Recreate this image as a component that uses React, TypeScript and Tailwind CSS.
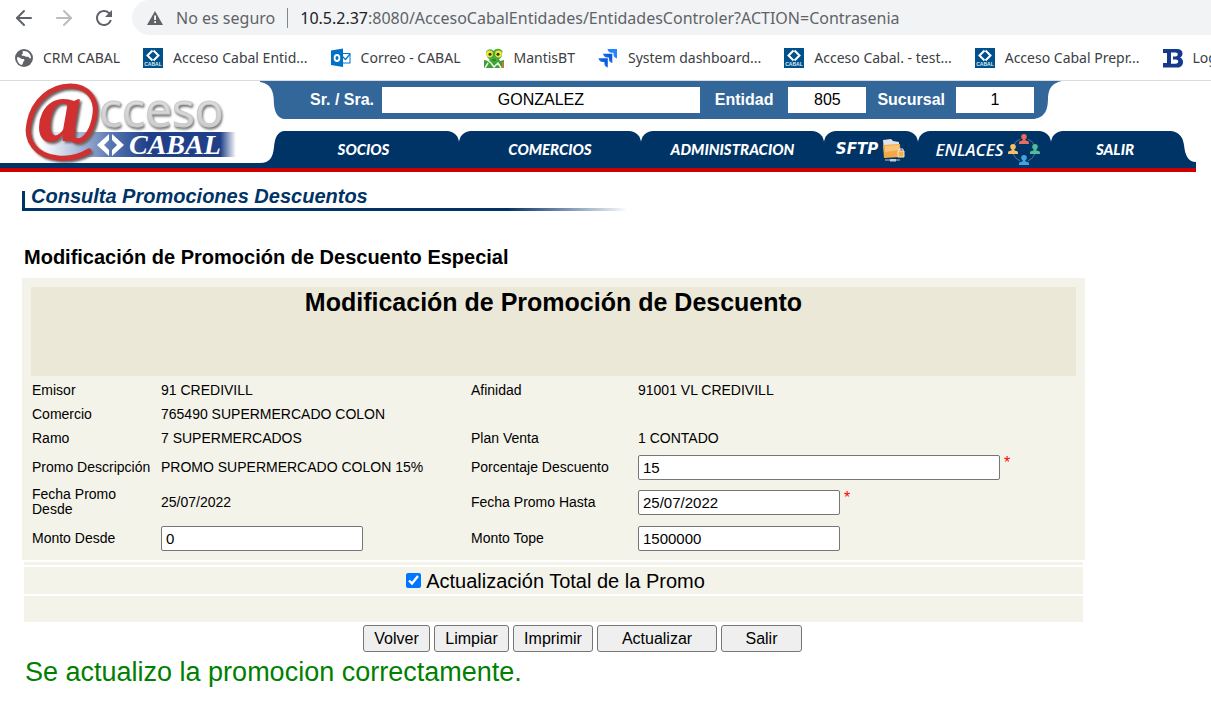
import { useState } from "react";
import { ArrowLeft, ArrowRight } from "lucide-react";
import { MdRefresh } from "react-icons/md";

const CabalTile = () => (
  <svg width="20" height="20" viewBox="0 0 20 20" className="shrink-0">
    <rect width="20" height="20" fill="#00508c" />
    <path d="M9.500 2.500 4.500 7.500l5 5M10.500 2.500l5 5-5 5" fill="none" stroke="#fff" strokeWidth="2" />
    <text x="10" y="18" textAnchor="middle" fontSize="5" fontWeight="700" fill="#dcebf5" fontFamily="Liberation Sans, sans-serif">
      CABAL
    </text>
  </svg>
);

const GlobeIcon = () => (
  <svg width="18" height="18" viewBox="0 0 18 18" className="shrink-0">
    <circle cx="9" cy="9" r="9" fill="#5f6368" />
    <path d="M2 8.2c1.6-.2 3 .2 3.700 1.100.5.9 1.900.6 2.900.8 1.200.3 1 1.600.2 2.200-.9.700-.6 1.700-1.200 2.700-.3.600-.8 1-1.400 1C3.500 14.800 1.800 11.800 2 8.200z" fill="#fff" />
    <path d="M7.600 2.200c2.300-.6 4.700.2 6.200 1.700 1.400 1.400 2.200 3.200 2.200 5.100-.8.900-1.600.3-2-.6-.5-1-1.500-.7-2.400-.6-1.200.1-1.700-1-2.800-1.100-1-.1-2 .2-2.200-.7-.1-.8.900-.9 1.300-1.500.4-.7-.6-1.500-.3-2.300z" fill="#fff" />
  </svg>
);

const OutlookIcon = () => (
  <svg width="20" height="20" viewBox="0 0 20 20" className="shrink-0">
    <rect x="9" y="5.500" width="10" height="9.500" fill="#fff" stroke="#0072c6" />
    <path d="m11 8 3.500 3.500L19 6" fill="none" stroke="#0072c6" strokeWidth="1.200" />
    <path d="M0 2.500 12 .5v18.500L0 17z" fill="#0072c6" />
    <ellipse cx="6" cy="10" rx="2.400" ry="3" fill="none" stroke="#fff" strokeWidth="1.800" />
  </svg>
);

const MantisIcon = () => (
  <svg width="20" height="20" viewBox="0 0 20 20" className="shrink-0">
    <path d="M0 12l5 1 2-3h7l2 3 4-1v8H0z" fill="#3f9e3a" />
    <path d="M3 12l4 3 3 4 4-4 3 5M1 20l3-5" fill="none" stroke="#e9f7e4" strokeWidth="1.500" />
    <path d="M2 3.500C5 0 8 1 9.500 3 12 0 16 0 18.500 3l-1 6-5 5H8L3 9z" fill="#45ad32" />
    <circle cx="5.500" cy="6" r="3.400" fill="#f2e33a" />
    <circle cx="14.500" cy="6" r="3.400" fill="#f2e33a" />
    <circle cx="6" cy="6.300" r="1.500" fill="#2c3a12" />
    <circle cx="14" cy="6.300" r="1.500" fill="#2c3a12" />
    <path d="M8 12h4" stroke="#1f6c1d" />
    <rect x="18" y="14" width="2" height="6" fill="#c77836" />
  </svg>
);

const JiraIcon = () => (
  <svg width="20" height="20" viewBox="0 0 20 20" className="shrink-0">
    <defs>
      <linearGradient id="jira" x1="1" y1="0" x2="0" y2="1">
        <stop offset="0.300" stopColor="#0b5cdb" />
        <stop offset="1" stopColor="#3b90ff" />
      </linearGradient>
    </defs>
    <path d="M9.500 1H19v9.500c-2.200-.6-3.500-2-3.500-4.200V4.700h-1.800C11.300 4.700 9.900 3.200 9.500 1z" fill="#2684ff" />
    <path d="M5 5.700h9.300v9.300c-2.200-.6-3.400-2-3.400-4.100V9.400H9.200C7 9.400 5.500 8 5 5.700z" fill="url(#jira)" />
    <path d="M.5 10.300h9.300v9.300c-2.200-.6-3.400-2-3.400-4.100V14H4.700C2.500 14 1 12.600.5 10.300z" fill="url(#jira)" />
  </svg>
);

const BIcon = () => (
  <svg width="20" height="20" viewBox="0 0 20 20" className="shrink-0">
    <path
      fillRule="evenodd"
      d="M0 1h14c3.500 0 5.500 1.600 5.500 4.500 0 2-1 3.400-2.500 4 2 .7 3 2.200 3 4.500 0 3.500-2.300 5.500-6 5.500H0v-4.500h4V5H0zM8 4.500h4.500c1.500 0 2.200.7 2.200 1.900s-.8 2-2.200 2H10v3h2.800c1.600 0 2.400.8 2.400 2.100 0 1.400-.9 2.200-2.500 2.200H8z"
      fill="#153a8c"
    />
  </svg>
);

const Logo = () => (
  <svg width="240" height="82" viewBox="0 0 240 82" role="img" aria-label="Acceso Cabal">
    <defs>
      <linearGradient id="logoBar">
        <stop offset="0" stopColor="#7d96c6" stopOpacity="0" />
        <stop offset="0.350" stopColor="#5b7ab5" />
        <stop offset="0.550" stopColor="#1f4088" />
        <stop offset="0.920" stopColor="#1f4088" />
        <stop offset="1" stopColor="#1f4088" stopOpacity="0" />
      </linearGradient>
      <linearGradient id="logoGray" x2="0" y2="1">
        <stop offset="0" stopColor="#ececec" />
        <stop offset="1" stopColor="#c4c4c4" />
      </linearGradient>
    </defs>
    <rect x="40" y="51" width="196" height="25" fill="url(#logoBar)" />
    <text
      x="99"
      y="46"
      fill="url(#logoGray)"
      stroke="#c9c9c9"
      fontFamily="'Open Sans', sans-serif"
      fontSize="48"
      className="drop-shadow-[1px_2px_1px_#777777]"
    >
      cceso
    </text>
    <g className="drop-shadow-[2px_2px_1px_#6b6464]">
      <path
        d="M89 70C79 76 68 78 58 77 36 75 25 60 29 42 33 20 51 5 70 5 88 5 97 18 95 33 93 48 86 60 77 60 73 60 71 57 73 50"
        fill="none"
        stroke="#d03030"
        strokeWidth="5"
        strokeLinecap="round"
      />
      <text x="38" y="60" fill="#d03030" fontFamily="'Liberation Serif', serif" fontStyle="italic" fontWeight="700" fontSize="88">
        a
      </text>
    </g>
    <path d="M109 53 97 64l12 11v-6l-5-5 5-5zM112 53l12 11-12 11v-6l5-5-5-5z" fill="#fff" />
    <text x="129" y="73" fill="#fff" fontFamily="'Liberation Serif', serif" fontStyle="italic" fontWeight="700" fontSize="28">
      CABAL
    </text>
  </svg>
);

const FolderIcon = () => (
  <svg width="24" height="24" viewBox="0 0 24 24">
    <path d="M1 2 9 1l2 2 6 1v10H2z" fill="#dfe3e8" />
    <path d="M1 7l17-1 1 13-17 1z" fill="#f2a848" />
    <path d="M3 8l14-1v5L3 14z" fill="#f9c478" />
    <path d="M16 13h6v6h-6z" fill="#f0b050" stroke="#fbe3b8" strokeWidth="1" />
    <path d="M17 13v-2h4v2" fill="none" stroke="#e6ebf0" />
    <path d="M3 22h15" stroke="#8d949c" strokeWidth="1.500" />
    <path d="M8 21h6v2.500H8z" fill="#c6cbd0" />
  </svg>
);

const PersonShape = ({ x, y, color }: { x: number; y: number; color: string }) => (
  <g transform={`translate(${x} ${y})`} fill={color}>
    <circle cx="5" cy="2.800" r="2.800" />
    <path d="M3.800 4h2.400v2.200l3 1.100c.7.300.8 1 .8 2.700H0c0-1.700.1-2.400.8-2.700l3-1.100z" />
  </g>
);

const PeopleIcon = () => (
  <svg width="34" height="32" viewBox="0 0 34 32">
    <circle cx="17" cy="16" r="11.500" fill="none" stroke="#56718c" strokeWidth="1" strokeDasharray="10 8" strokeDashoffset="-4" />
    <PersonShape x={12} y={0} color="#ec6a5c" />
    <PersonShape x={1} y={10} color="#f5bf6b" />
    <PersonShape x={23} y={10} color="#4dbd9b" />
    <PersonShape x={12} y={21} color="#3ea6dd" />
  </svg>
);

const bookmarks = [
  { label: "CRM CABAL", icon: <GlobeIcon /> },
  { label: "Acceso Cabal Entid...", icon: <CabalTile /> },
  { label: "Correo - CABAL", icon: <OutlookIcon /> },
  { label: "MantisBT", icon: <MantisIcon /> },
  { label: "System dashboard...", icon: <JiraIcon /> },
  { label: "Acceso Cabal. - test...", icon: <CabalTile /> },
  { label: "Acceso Cabal Prepr...", icon: <CabalTile /> },
  { label: "Log", icon: <BIcon /> },
];

const BrowserBar = () => (
  <div className="border-b border-[#dadce0] bg-white font-['Noto_Sans','Open_Sans',sans-serif]">
    <div className="flex h-[35px] items-center pl-3">
      <button aria-label="Atrás" className="mr-4 text-[#5f6368]">
        <ArrowLeft size={24} strokeWidth={2} />
      </button>
      <button aria-label="Adelante" className="mr-4 text-[#babcbe]">
        <ArrowRight size={24} strokeWidth={2} />
      </button>
      <button aria-label="Recargar" className="text-[#5f6368]">
        <MdRefresh size={24} />
      </button>
      <div className="ml-4 flex h-full min-w-0 flex-1 items-center rounded-l-full bg-[#f1f3f4] pl-[14px] text-base whitespace-nowrap text-[#5f6368]">
        <svg width="18" height="16" viewBox="0 0 18 16" className="mr-3 shrink-0">
          <path d="M9 1 17 15H1z" fill="#5f6368" />
          <path d="M8.200 5.500h1.800v4.500H8.200zM8.200 11.300h1.800V13H8.200z" fill="#fff" />
        </svg>
        <span>No es seguro</span>
        <span className="mx-3 h-5 w-px shrink-0 bg-[#80868b]" />
        <span>
          <span className="text-[#202124]">10.5.2.37</span>:8080/AccesoCabalEntidades/EntidadesControler?ACTION=Contrasenia
        </span>
      </div>
    </div>
    <nav className="flex h-[45px] items-center gap-[23px] overflow-hidden pl-[15px] text-sm whitespace-nowrap text-[#3c4043]">
      {bookmarks.map((item) => (
        <a key={item.label} href="#" className="flex shrink-0 items-center gap-[10px]">
          {item.icon}
          <span>{item.label}</span>
        </a>
      ))}
    </nav>
  </div>
);

const Header = () => (
  <header className="mr-[15px] flex flex-col border-b-4 border-[#cc0000]">
    <div className="flex">
      <div className="flex w-[260px] shrink-0 flex-col border-b-[5px] border-[#003366]">
        <Logo />
      </div>
      <div className="flex min-w-0 flex-1 flex-col gap-3">
        <div className="mr-[134px] flex h-[38px]">
          <svg width="24" height="38" viewBox="0 0 24 38" className="shrink-0">
            <path d="M0 0H24V38C18 37 15 32 14 24 14 16 14 3 0 1z" fill="#336699" />
          </svg>
          <div className="flex min-w-0 flex-1 items-center bg-[#336699] pl-[26px] text-base font-bold text-white">
            <label htmlFor="nombre" className="mr-2 shrink-0">
              Sr. / Sra.
            </label>
            <input id="nombre" readOnly value="GONZALEZ" className="h-[26px] min-w-0 flex-1 bg-white text-center font-normal text-black" />
            <label htmlFor="entidad" className="mx-[15px] shrink-0">
              Entidad
            </label>
            <input id="entidad" readOnly value="805" className="h-[26px] w-[78px] bg-white text-center font-normal text-black" />
            <label htmlFor="sucursal" className="mx-[11px] shrink-0">
              Sucursal
            </label>
            <input id="sucursal" readOnly value="1" className="h-[26px] w-[78px] bg-white text-center font-normal text-black" />
          </div>
          <svg width="28" height="38" viewBox="0 0 28 38" className="shrink-0">
            <path d="M0 0H28C19 2 15 6 14 16 14 28 12 36 0 38z" fill="#336699" />
          </svg>
        </div>
        <nav className="flex h-[37px] font-['Lato',sans-serif] text-[15px] font-black text-white italic">
          <svg width="24" height="37" viewBox="0 0 24 37" className="shrink-0">
            <path d="M24 0C17 1 15 7 14 16 13 26 10 32 0 32V37H24z" fill="#003366" />
          </svg>
          <a href="#socios" className="flex flex-[159] items-center justify-center rounded-tr-xl bg-[#003366] pr-4">
            SOCIOS
          </a>
          <a href="#comercios" className="flex flex-[182] items-center justify-center rounded-t-xl bg-[#003366]">
            COMERCIOS
          </a>
          <a href="#administracion" className="flex flex-[183] items-center justify-center rounded-t-xl bg-[#003366]">
            ADMINISTRACION
          </a>
          <a href="#sftp" className="flex flex-[94] items-center justify-center gap-1 rounded-t-xl bg-[#003366]">
            <span className="font-['DejaVu_Sans',sans-serif] font-bold">SFTP</span>
            <FolderIcon />
          </a>
          <a href="#enlaces" className="flex flex-[125] items-center justify-center gap-1 rounded-t-xl bg-[#003366] pl-2">
            <span className="font-['Open_Sans',sans-serif] text-[17px] font-semibold">ENLACES</span>
            <PeopleIcon />
          </a>
          <a href="#salir" className="flex flex-[112] items-center justify-center rounded-tl-xl bg-[#003366] pl-2">
            SALIR
          </a>
          <svg width="25" height="37" viewBox="0 0 25 37" className="shrink-0">
            <path d="M0 0C8 1 12 6 13 14 14 24 17 31 25 31V37H0z" fill="#003366" />
          </svg>
        </nav>
      </div>
    </div>
  </header>
);

const inputClass = "h-[25px] rounded-[2px] border border-[#767676] bg-white px-1 text-[15px]";
const buttonClass = "h-[27px] rounded-[3px] border border-[#767676] bg-[#efefef] text-base leading-none";

const App: React.FC = () => {
  const [porcentaje, setPorcentaje] = useState("15");
  const [fechaHasta, setFechaHasta] = useState("25/07/2022");
  const [montoDesde, setMontoDesde] = useState("0");
  const [montoTope, setMontoTope] = useState("1500000");
  const [total, setTotal] = useState(true);

  return (
    <div className="min-h-screen overflow-x-hidden bg-white font-['Liberation_Sans',Arial,sans-serif] text-black">
      <BrowserBar />
      <Header />

      <main className="pl-[22px]">
        <div className="mt-[19px] w-[606px] max-w-full">
          <h1 className="flex h-[17px] items-center border-l-[3px] border-[#003366] pb-2 pl-[6px] text-xl font-bold text-[#003366] italic">
            Consulta Promociones Descuentos
          </h1>
          <div className="h-[3px] bg-linear-to-r from-[#003366] from-80% to-white" />
        </div>

        <h2 className="mt-8 ml-[2px] text-xl font-bold">Modificación de Promoción de Descuento Especial</h2>

        <form className="mt-[7px] mr-[126px]" onSubmit={(e) => e.preventDefault()}>
          <div className="bg-[#f4f3ea] px-[9px] pt-[9px] pb-1">
            <h3 className="h-[89px] bg-[#ece8d8] text-center text-[25px] leading-[30px] font-bold">Modificación de Promoción de Descuento</h3>
            <div className="mt-[2px] grid grid-cols-[129px_310px_167px_1fr] grid-rows-[24px_24px_24px_34px_36px_36px] items-center pl-px text-sm leading-[15px]">
              <span>Emisor</span>
              <span>91 CREDIVILL</span>
              <span>Afinidad</span>
              <span>91001 VL CREDIVILL</span>

              <span>Comercio</span>
              <span className="col-span-3">765490 SUPERMERCADO COLON</span>

              <span>Ramo</span>
              <span>7 SUPERMERCADOS</span>
              <span>Plan Venta</span>
              <span>1 CONTADO</span>

              <span>Promo Descripción</span>
              <span>PROMO SUPERMERCADO COLON 15%</span>
              <label htmlFor="porcentaje">Porcentaje Descuento</label>
              <div className="flex items-start gap-1">
                <input id="porcentaje" value={porcentaje} onChange={(e) => setPorcentaje(e.target.value)} className={`${inputClass} w-[362px]`} />
                <span className="text-base leading-[15px] text-[#ff0000]">*</span>
              </div>

              <span className="pr-8">Fecha Promo Desde</span>
              <span>25/07/2022</span>
              <label htmlFor="fechaHasta">Fecha Promo Hasta</label>
              <div className="flex items-start gap-1">
                <input id="fechaHasta" value={fechaHasta} onChange={(e) => setFechaHasta(e.target.value)} className={`${inputClass} w-[202px]`} />
                <span className="text-base leading-[15px] text-[#ff0000]">*</span>
              </div>

              <label htmlFor="montoDesde">Monto Desde</label>
              <input id="montoDesde" value={montoDesde} onChange={(e) => setMontoDesde(e.target.value)} className={`${inputClass} w-[202px]`} />
              <label htmlFor="montoTope">Monto Tope</label>
              <input id="montoTope" value={montoTope} onChange={(e) => setMontoTope(e.target.value)} className={`${inputClass} w-[202px]`} />
            </div>
          </div>

          <div className="mx-[2px] mt-[2px] flex flex-col gap-[2px]">
            <div className="h-[3px] bg-[#f4f3ea]" />
            <div className="flex h-[27px] items-center justify-center gap-[5px] bg-[#f4f3ea] pl-1 text-xl">
              <input id="total" type="checkbox" checked={total} onChange={(e) => setTotal(e.target.checked)} className="size-[15px] accent-[#0075ff]" />
              <label htmlFor="total">Actualización Total de la Promo</label>
            </div>
            <div className="h-[26px] bg-[#f4f3ea]" />
          </div>
        </form>

        <div className="mt-[3px] mr-[68px] flex justify-center gap-1">
          <button className={`${buttonClass} w-[67px]`}>Volver</button>
          <button className={`${buttonClass} w-[75px]`}>Limpiar</button>
          <button className={`${buttonClass} w-[80px]`}>Imprimir</button>
          <button className={`${buttonClass} w-[120px]`}>Actualizar</button>
          <button className={`${buttonClass} w-[81px]`}>Salir</button>
        </div>

        <p className="ml-[3px] text-[27px] leading-10 text-[#008000]">Se actualizo la promocion correctamente.</p>
      </main>
    </div>
  );
};

export default App;
